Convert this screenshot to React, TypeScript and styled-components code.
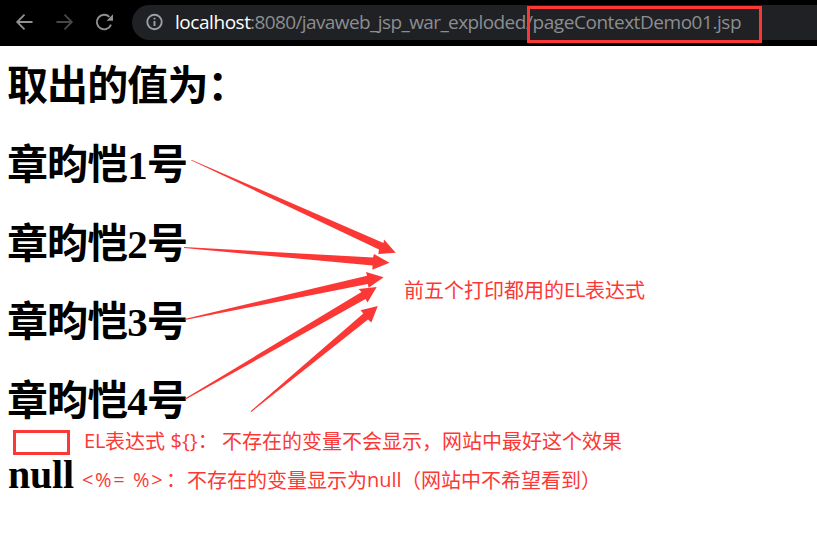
import React from 'react';
import styled, { createGlobalStyle } from 'styled-components';

const RED = '#fc3836';

const GlobalStyle = createGlobalStyle`
  body { margin: 0; background: #fff; overflow: hidden; }
  * { box-sizing: border-box; }
`;

const Page = styled.div`
  position: relative;
  width: 817px;
  height: 542px;
  overflow: hidden;
  background: #fff;
`;

const Toolbar = styled.header`
  display: flex;
  align-items: flex-start;
  height: 46px;
  padding: 5px 0 0 12px;
  background: #000;
`;

const NavButtons = styled.nav`
  display: flex;
  gap: 16px;
  width: 120px;
  height: 34px;
  align-items: center;
`;

const Icon = styled.svg`
  display: block;
  flex: none;
`;

const AddressBar = styled.div`
  display: flex;
  align-items: center;
  flex: 1;
  height: 35px;
  padding: 0 0 1px 12px;
  border-radius: 18px 0 0 18px;
  background: #202124;
`;

const Url = styled.div`
  display: flex;
  margin-left: 9px;
  font: 19px/34px "Open Sans", "Noto Sans", sans-serif;
  white-space: pre;
`;

const UrlPart = styled.span<{ $color: string; $width: number; $spacing: number }>`
  width: ${(p) => p.$width}px;
  color: ${(p) => p.$color};
  letter-spacing: ${(p) => p.$spacing}px;
`;

const Content = styled.main`
  padding: 14px 7px;
`;

const Heading = styled.h1<{ $gap: number }>`
  height: 52px;
  margin: 0 0 ${(p) => p.$gap}px;
  color: #000;
  font: bold 41px/52px "Liberation Serif", "Noto Sans CJK SC", serif;
  letter-spacing: -0.9px;
  white-space: nowrap;
`;

const LatinHeading = styled(Heading)`
  padding-left: 1px;
  font-size: 40px;
  letter-spacing: -0.2px;
`;

const Frame = styled.div<{ $x: number; $y: number; $w: number; $h: number }>`
  position: absolute;
  left: ${(p) => p.$x}px;
  top: ${(p) => p.$y}px;
  width: ${(p) => p.$w}px;
  height: ${(p) => p.$h}px;
  border: 3px solid ${RED};
`;

const Note = styled.div<{ $x: number; $y: number }>`
  position: absolute;
  left: ${(p) => p.$x}px;
  top: ${(p) => p.$y}px;
  display: flex;
  color: ${RED};
  font: 400 20px/30px "Noto Sans CJK SC", sans-serif;
  white-space: pre;
`;

const Latin = styled.span<{ $width: number; $spacing?: number }>`
  width: ${(p) => p.$width}px;
  font: 400 20px/30px "Open Sans", "Noto Sans", "Noto Sans CJK SC", sans-serif;
  letter-spacing: ${(p) => p.$spacing ?? 0}px;
`;

const ArrowLayer = styled.svg`
  position: absolute;
  left: 0;
  top: 0;
  pointer-events: none;
`;

const arrows = [
  '190.5,160 192,160 383.5,243 384,239.5 395.7,252.7 378.3,254 379,249.5',
  '184,247 373,257.5 374,254 389.5,262.8 372.3,269.7 372.6,265.5 184,248',
  '184.5,319 367,275.8 366,272 383.7,277.2 368.6,287.7 367.8,284 185,320',
  '185,398.5 361.5,292 358.5,289 376.7,287 367.5,302.5 365.5,299 185.5,399.5',
  '250.5,411.3 363.3,313.5 360.5,310.3 377.8,306 371.3,322.5 368,319.5 251.3,412',
];

export default function App() {
  return (
    <Page>
      <GlobalStyle />
      <Toolbar>
        <NavButtons>
          <Icon width="24" height="24" viewBox="0 0 24 24" fill="none" stroke="#919191" strokeWidth="1.8">
            <path d="M20.5 12H5.5M12.5 4.7L5.2 12L12.5 19.3" />
          </Icon>
          <Icon width="24" height="24" viewBox="0 0 24 24" fill="none" stroke="#484848" strokeWidth="1.8">
            <path d="M4.5 12H19.5M12.5 4.7L19.8 12L12.5 19.3" />
          </Icon>
          <Icon width="24" height="24" viewBox="0 0 24 24" fill="none" stroke="#919191" strokeWidth="1.9">
            <path d="M19 14.6A7.3 7.3 0 1 1 17.4 6.9" />
            <path d="M21 4.3V10.8H14.5Z" fill="#919191" stroke="none" />
          </Icon>
        </NavButtons>
        <AddressBar>
          <Icon width="22" height="22" viewBox="0 0 22 22" fill="none" stroke="#9aa0a6" strokeWidth="1.9">
            <circle cx="10.5" cy="11" r="7.2" />
            <path d="M10.5 10V15M10.5 6.7V8.5" />
          </Icon>
          <Url>
            <UrlPart $color="#fff" $width={75} $spacing={-0.45}>localhost</UrlPart>
            <UrlPart $color="#8b8e91" $width={276} $spacing={-0.6}>:8080/javaweb_jsp_war_exploded</UrlPart>
            <UrlPart $color="#8b8e91" $width={216} $spacing={-0.45}>/pageContextDemo01.jsp</UrlPart>
          </Url>
        </AddressBar>
      </Toolbar>
      <Content>
        <Heading $gap={27}>取出的值为：</Heading>
        <Heading $gap={27}>章昀恺1号</Heading>
        <Heading $gap={26}>章昀恺2号</Heading>
        <Heading $gap={27}>章昀恺3号</Heading>
        <Heading $gap={22}>章昀恺4号</Heading>
        <LatinHeading $gap={0}>null</LatinHeading>
      </Content>
      <Frame $x={527} $y={6} $w={235} $h={37} />
      <Frame $x={13} $y={430} $w={57} $h={25} />
      <ArrowLayer width="817" height="542" fill={RED}>
        {arrows.map((points) => (
          <polygon key={points} points={points} />
        ))}
      </ArrowLayer>
      <Note $x={404} $y={275}>
        前五个打印都用的<Latin $width={21}>EL</Latin>表达式
      </Note>
      <Note $x={84} $y={426}>
        <Latin $width={21}>EL</Latin>表达式<Latin $width={57} $spacing={0.3}> {'${}'}：</Latin>不存在的变量不会显示，网站中最好这个效果
      </Note>
      <Note $x={82} $y={465}>
        <Latin $width={84} $spacing={1.6}>{'<%= %>'}</Latin>
        <Latin $width={21}>：</Latin>不存在的变量显示为<Latin $width={34}>null</Latin>（网站中不希望看到）
      </Note>
    </Page>
  );
}
